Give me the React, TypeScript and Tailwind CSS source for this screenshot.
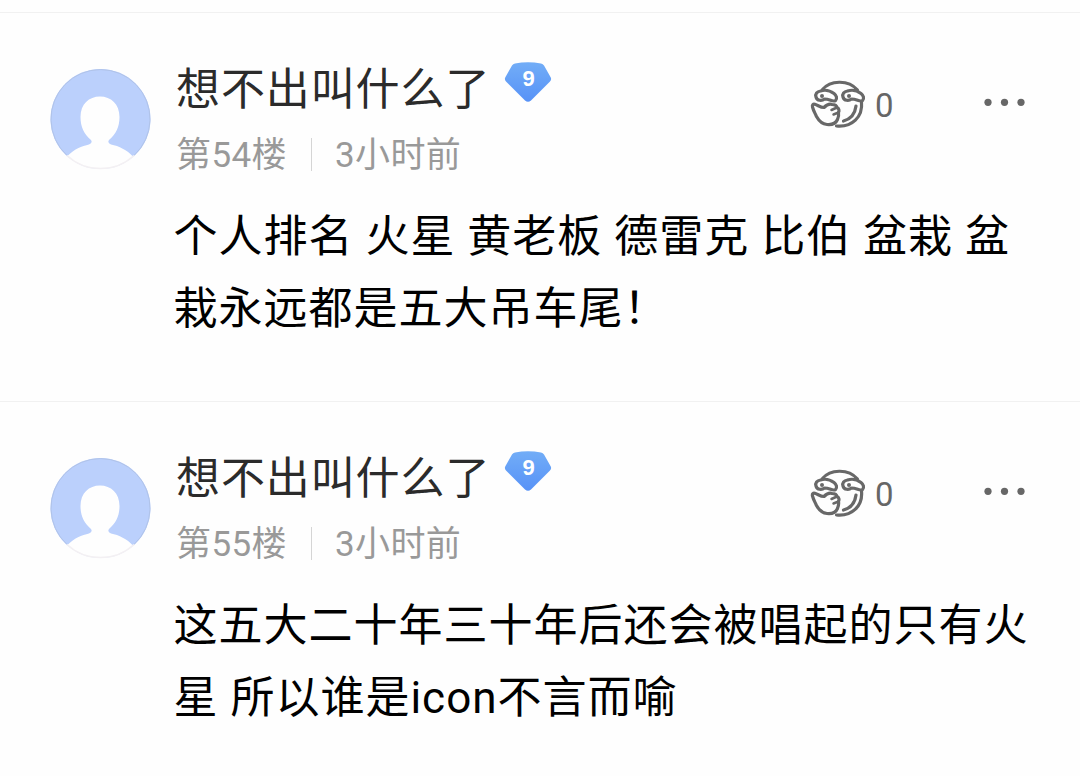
type Comment = {
  id: number
  name: string
  level: number
  floor: string
  time: string
  likes: number
  content: string
}

const comments: Comment[] = [
  {
    id: 54,
    name: "想不出叫什么了",
    level: 9,
    floor: "第54楼",
    time: "3小时前",
    likes: 0,
    content: "个人排名 火星 黄老板 德雷克 比伯 盆栽 盆栽永远都是五大吊车尾！",
  },
  {
    id: 55,
    name: "想不出叫什么了",
    level: 9,
    floor: "第55楼",
    time: "3小时前",
    likes: 0,
    content: "这五大二十年三十年后还会被唱起的只有火星 所以谁是icon不言而喻",
  },
]

function Avatar() {
  return (
    <svg className="mt-[55px] size-[102px] shrink-0" viewBox="0 0 102 102">
      <defs>
        <clipPath id="avatar-clip">
          <circle cx="51.500" cy="51" r="50" />
        </clipPath>
      </defs>
      <g clipPath="url(#avatar-clip)">
        <rect width="102" height="102" fill="#bbd0fc" />
        <path d="M0 102V97L18 88.500C25 81 33 78 40 76.500Q44 75 42 72C35 66 31.500 59 31.500 49C31.500 36 40 28.500 51 28.500C62 28.500 70.500 36 70.500 49C70.500 59 67 66 60 72Q58 75 62 76.500C70 78 78 82 84 88.500L102 97V102Z" fill="#fefefe" />
      </g>
      <path d="M18 87.500A49.500 49.500 0 1 1 85 87.500" fill="none" stroke="#b0c3e9" strokeWidth="1" />
      <path d="M18 87.500A49.500 49.500 0 0 0 85 87.500" fill="none" stroke="#f3f0f3" strokeWidth="1.500" />
    </svg>
  )
}

function LevelBadge({ level }: { level: number }) {
  return (
    <svg className="absolute left-[327px] top-[47px] h-[44px] w-[50px]" viewBox="0 0 50 44">
      <defs>
        <linearGradient id="badge-fill" x1="0" y1="0" x2="0" y2="1">
          <stop offset="0" stopColor="#72adf7" />
          <stop offset="1" stopColor="#5792f7" />
        </linearGradient>
      </defs>
      <path
        d="M12 3.500Q25 1 38 3.500Q40 4 41 5.500L47.500 17Q49 19.500 47 21.500L28 40.500Q25 43 22 40.500L3 21.500Q1 19.500 2.500 17L9 5.500Q10 4 12 3.500Z"
        fill="url(#badge-fill)"
      />
      <text
        x="25.500"
        y="26"
        textAnchor="middle"
        fill="#fff"
        className="font-['Liberation_Sans',sans-serif] text-[22px] font-bold"
      >
        {level}
      </text>
    </svg>
  )
}

function LikeIcon() {
  return (
    <svg
      className="h-[52px] w-[58px]"
      viewBox="0 0 58 52"
      fill="none"
      stroke="#686868"
      strokeWidth="3.200"
      strokeLinecap="round"
      strokeLinejoin="round"
    >
      {/* face outline */}
      <path d="M12.500 10.500C20 1.500 38 0 47.500 11" />
      <path d="M51.500 23C53 38 42 48.500 26.500 47" />
      <path d="M46 27C45 35 41 40 33.500 42" />
      {/* eyes */}
      <path d="M10.500 12C15 10.500 20 11.500 24 14.500C26.500 16.500 27.500 19.500 25.500 21.500C23 23.500 20 20 14.500 20C12 22 7 22 6 18C5 15 7 12.500 10.500 12Z" />
      <path d="M37.500 12C42 10.500 47 11.500 51 14.500C53.500 16.500 54.500 19.500 52.500 21.500C50 23.500 47 20 41.500 20C39 22 34 22 33 18C32 15 34 12.500 37.500 12Z" />
      <circle cx="12" cy="17" r="2" fill="#686868" stroke="none" />
      <circle cx="39" cy="17" r="2" fill="#686868" stroke="none" />
      {/* hand */}
      <path d="M14 28.500C11 28.500 8 26.500 5.500 25.500C3 24.500 2 26 2.500 28C3.500 32 5 34 6.500 37.500C9 42 12 45 17 45.500C22 46 26 44 27.500 40.500C28.500 38 29 36 28.500 33.500C29.500 31.500 29 29.500 27 28.500C26.500 25.500 24 25.500 22 25.500C19 24.500 16.500 26 14 28.500Z" />
      <path d="M21.500 31L27 28.500M23.500 35.500L28.500 33.500" strokeWidth="2.500" />
    </svg>
  )
}

function MoreIcon() {
  return (
    <svg className="h-2 w-[42px]" viewBox="0 0 42 8" fill="#676767">
      <circle cx="4" cy="4.300" r="3.600" />
      <circle cx="20.500" cy="4.300" r="3.600" />
      <circle cx="37" cy="4.300" r="3.600" />
    </svg>
  )
}

function CommentItem({ comment }: { comment: Comment }) {
  return (
    <article className="h-[389px] border-t border-[#f1f1f1] pl-[49px]">
      <div className="flex h-[188px]">
        <Avatar />
        <div className="ml-[25px] w-[634px]">
          <div className="relative flex h-[109px]">
            <h2 className="mt-11 text-[44px] leading-[66px] tracking-[0.9px] text-[#2b2b2b]">{comment.name}</h2>
            <LevelBadge level={comment.level} />
          </div>
          <div className="flex h-[66px] items-center text-[35px] leading-[66px] tracking-[0.4px] text-[#999]">
            <span className="mt-0.5">{comment.floor}</span>
            <span className="-mt-0.5 ml-6 mr-[23px] h-[33px] w-px bg-[#d5d5d5]" />
            <span className="mt-0.5">{comment.time}</span>
          </div>
        </div>
        <button className="mt-[66px] flex h-[52px] items-center">
          <LikeIcon />
          <span className="ml-[7px] mt-0.5 text-[33px] leading-[52px] text-[#666]">{comment.likes}</span>
        </button>
        <button className="ml-[90px] mt-[85px] flex h-2">
          <MoreIcon />
        </button>
      </div>
      <p className="ml-[124.5px] w-[860px] text-[44px] leading-[72px] tracking-[1px] text-black">{comment.content}</p>
    </article>
  )
}

export default function App() {
  return (
    <main
      lang="zh-CN"
      className="h-[776px] w-[1080px] overflow-hidden bg-[#fefefe] pt-3 font-[Roboto,'Noto_Sans_CJK_SC',sans-serif]"
    >
      {comments.map((comment) => (
        <CommentItem key={comment.id} comment={comment} />
      ))}
    </main>
  )
}
